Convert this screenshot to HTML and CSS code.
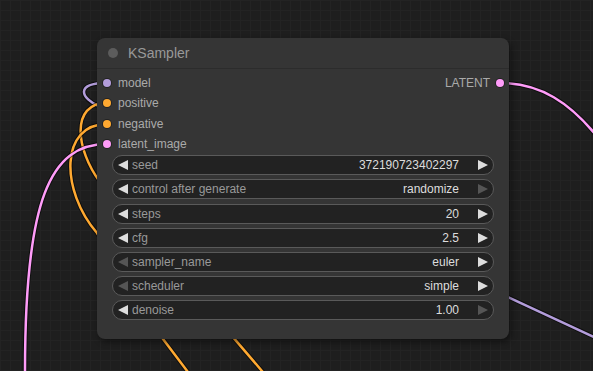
FILE: index.html
```html
<!DOCTYPE html>
<html lang="en">
  <head>
    <meta charset="UTF-8" />
    <meta name="viewport" content="width=device-width, initial-scale=1.0" />
    <title>KSampler</title>
    <link rel="stylesheet" href="styles.css">
  </head>
  <body>
    <div class="canvas">
      <!-- Links between nodes -->
      <svg class="links" width="593" height="371" viewBox="0 0 593 371">
        <path class="link-edge" d="M 107 83 C 75 83, 80 98, 100 107 L 800 433" />
        <path class="link model" d="M 107 83 C 75 83, 80 98, 100 107 L 800 433" />
        <path class="link-edge" d="M 107 103 C 70 103, 76 150, 100 182 L 262 371 L 290 404" />
        <path class="link cond" d="M 107 103 C 70 103, 76 150, 100 182 L 262 371 L 290 404" />
        <path class="link-edge" d="M 107 124 C 60 124, 60 190, 97 233 L 163 339 L 200 388" />
        <path class="link cond" d="M 107 124 C 60 124, 60 190, 97 233 L 163 339 L 200 388" />
        <path class="link-edge" d="M 107 144 C 50 144, 25 200, 25 371 L 25 400" />
        <path class="link latent" d="M 107 144 C 50 144, 25 200, 25 371 L 25 400" />
        <path class="link-edge" d="M 500 83 C 540 83, 570 102, 600 140" />
        <path class="link latent" d="M 500 83 C 540 83, 570 102, 600 140" />
      </svg>

      <!-- KSampler node -->
      <div class="node">
        <div class="node-title">
          <span class="title-dot"></span>
          <span>KSampler</span>
        </div>

        <div class="slots">
          <div class="slot-col">
            <div class="slot"><span class="dot model"></span>model</div>
            <div class="slot"><span class="dot cond"></span>positive</div>
            <div class="slot"><span class="dot cond"></span>negative</div>
            <div class="slot"><span class="dot latent"></span>latent_image</div>
          </div>
          <div class="slot-col outputs">
            <div class="slot out">LATENT<span class="dot latent"></span></div>
          </div>
        </div>

        <div class="widgets">
          <div class="widget">
            <span class="arrow left"></span>
            <span class="label">seed</span>
            <span class="value">372190723402297</span>
            <span class="arrow right"></span>
          </div>
          <div class="widget">
            <span class="arrow left"></span>
            <span class="label">control after generate</span>
            <span class="value">randomize</span>
            <span class="arrow right off"></span>
          </div>
          <div class="widget">
            <span class="arrow left"></span>
            <span class="label">steps</span>
            <span class="value">20</span>
            <span class="arrow right"></span>
          </div>
          <div class="widget">
            <span class="arrow left"></span>
            <span class="label">cfg</span>
            <span class="value">2.5</span>
            <span class="arrow right"></span>
          </div>
          <div class="widget">
            <span class="arrow left off"></span>
            <span class="label">sampler_name</span>
            <span class="value">euler</span>
            <span class="arrow right"></span>
          </div>
          <div class="widget">
            <span class="arrow left off"></span>
            <span class="label">scheduler</span>
            <span class="value">simple</span>
            <span class="arrow right"></span>
          </div>
          <div class="widget">
            <span class="arrow left"></span>
            <span class="label">denoise</span>
            <span class="value">1.00</span>
            <span class="arrow right off"></span>
          </div>
        </div>
      </div>
    </div>
  </body>
</html>
```

FILE: styles.css
```css
/* Global */
* {
  box-sizing: border-box;
}
body {
  margin: 0;
  font-family: "Liberation Sans", Arial, sans-serif;
  background: #1d1d1d;
  overflow: hidden;
}

/* Canvas with grid */
.canvas {
  position: relative;
  width: 593px;
  height: 371px;
  background-color: #1e1e1e;
  background-image:
    linear-gradient(to right, #232323 1px, transparent 1px),
    linear-gradient(to bottom, #232323 1px, transparent 1px);
  background-size: 10px 10px;
  overflow: hidden;
}
.links {
  position: absolute;
  left: 0;
  top: 0;
}
.link-edge {
  fill: none;
  stroke: rgba(0, 0, 0, 0.55);
  stroke-width: 4.5;
}
.link {
  fill: none;
  stroke-width: 2.5;
}
.link.model {
  stroke: #b39ddb;
}
.link.cond {
  stroke: #ffa931;
}
.link.latent {
  stroke: #ff9cf9;
}

/* Node */
.node {
  position: absolute;
  left: 97px;
  top: 38px;
  width: 412px;
  height: 301px;
  background: #353535;
  border-radius: 8px;
  box-shadow: 2px 3px 6px rgba(0, 0, 0, 0.45);
  color: #aaa;
  font-size: 12px;
}
.node-title {
  display: flex;
  align-items: center;
  height: 31px;
  padding-left: 11px;
  border-bottom: 1px solid #2c2c2c;
  color: #999;
  font-size: 14px;
}
.title-dot {
  width: 10px;
  height: 10px;
  border-radius: 50%;
  background: #5c5c5c;
  margin-right: 10px;
}

/* Input / output slots */
.slots {
  display: flex;
  justify-content: space-between;
  padding-top: 4px;
}
.slot {
  display: flex;
  align-items: center;
  height: 20.3px;
  padding-left: 6px;
}
.slot.out {
  padding-left: 0;
  padding-right: 5px;
}
.dot {
  width: 8px;
  height: 8px;
  border-radius: 50%;
  margin-right: 7px;
  box-shadow: 0 0 0 1px rgba(0, 0, 0, 0.35);
}
.slot.out .dot {
  margin-right: 0;
  margin-left: 6px;
}
.dot.model {
  background: #b39ddb;
}
.dot.cond {
  background: #ffa931;
}
.dot.latent {
  background: #ff9cf9;
}

/* Widgets */
.widgets {
  display: flex;
  flex-direction: column;
  gap: 4.2px;
  margin-top: 1px;
  padding: 0 15px;
}
.widget {
  display: flex;
  align-items: center;
  height: 20px;
  padding: 0 5px;
  background: #222;
  border: 1px solid #5a5a5a;
  border-radius: 10px;
}
.label {
  color: #999;
  margin-left: 4px;
}
.value {
  flex: 1;
  text-align: right;
  color: #ddd;
  margin-right: 19px;
}
.arrow {
  width: 0;
  height: 0;
  border-top: 5px solid transparent;
  border-bottom: 5px solid transparent;
}
.arrow.left {
  border-right: 10px solid #ddd;
}
.arrow.right {
  border-left: 10px solid #ddd;
}
.arrow.left.off {
  border-right-color: #555;
}
.arrow.right.off {
  border-left-color: #555;
}
```
